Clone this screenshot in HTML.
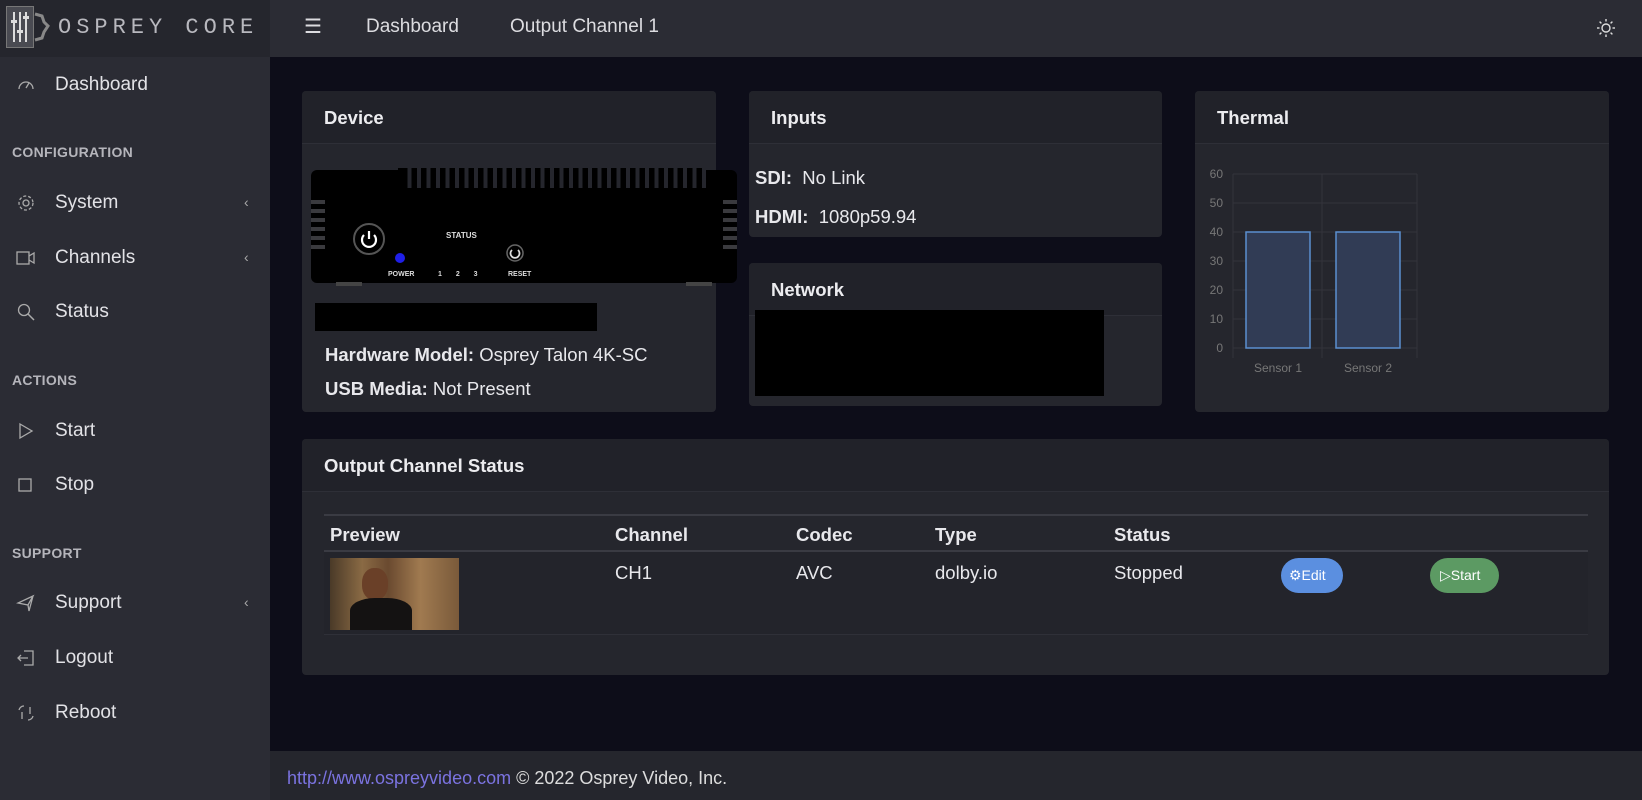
<!DOCTYPE html>
<html><head><meta charset="utf-8"><style>
*{margin:0;padding:0;box-sizing:border-box}
body{width:1642px;height:800px;overflow:hidden;background:#0d0d19;font-family:"Liberation Sans",sans-serif;color:#e4e4e8;position:relative}
.a{position:absolute}
#side{left:0;top:0;width:270px;height:800px;background:#2b2c34}
#logo{left:0;top:0;width:270px;height:57px;background:#25262d}
#top{left:270px;top:0;width:1372px;height:57px;background:#2b2c34}
.nav{font-size:19px;color:#dcdce0;top:16px}
.si{left:55px;font-size:19px;color:#e2e2e6}
.sh{left:12px;font-size:14px;font-weight:bold;color:#b5b5bb;letter-spacing:.3px}
.ic{left:16px;width:20px;height:20px}
.chev{left:244px;color:#aaa;font-size:14px}
.card{background:#25262d;border-radius:4px}
.ch{height:53px;background:#212229;border-bottom:1px solid #2e2f37;border-radius:4px 4px 0 0;font-weight:bold;font-size:18.5px;padding:16px 22px;color:#ececef}
.t{font-size:18.5px;color:#e8e8ec}
#foot{left:270px;top:751px;width:1372px;height:49px;background:#25262d}
.lbl{font-size:12px;fill:#777;font-family:"Liberation Sans",sans-serif}
</style></head><body>
<div id="side" class="a"></div>
<div id="logo" class="a">
 <div class="a" style="left:6px;top:6px;width:28px;height:42px;background:#4a4b52;border:1px solid #777"></div>
 <svg class="a" style="left:6px;top:6px" width="46" height="42" viewBox="0 0 46 42"><g stroke="#ddd" stroke-width="2"><line x1="8" y1="6" x2="8" y2="36"/><line x1="14" y1="6" x2="14" y2="36"/><line x1="20" y1="6" x2="20" y2="36"/></g><g fill="#ddd"><rect x="5" y="14" width="6" height="3"/><rect x="11" y="24" width="6" height="3"/><rect x="17" y="10" width="6" height="3"/></g><path d="M29 8 L36 10 L38 16 L42 20 L38 26 L36 32 L29 34" fill="none" stroke="#888" stroke-width="3"/></svg>
 <div class="a" style="left:58px;top:15px;font-family:'Liberation Mono',monospace;font-size:22px;letter-spacing:5px;color:#b8b8be">OSPREY CORE</div>
</div>
<div id="top" class="a">
 <div class="a nav" style="left:34px;top:14px;font-size:20px">☰</div>
 <div class="a nav" style="left:96px">Dashboard</div>
 <div class="a nav" style="left:240px">Output Channel 1</div>
 <svg class="a" style="left:1326px;top:18px" width="20" height="20" viewBox="0 0 20 20"><circle cx="10" cy="10" r="4" fill="none" stroke="#ddd" stroke-width="1.4"/><g stroke="#ddd" stroke-width="1.4"><line x1="10" y1="1" x2="10" y2="3.5"/><line x1="10" y1="16.5" x2="10" y2="19"/><line x1="1" y1="10" x2="3.5" y2="10"/><line x1="16.5" y1="10" x2="19" y2="10"/><line x1="3.6" y1="3.6" x2="5.4" y2="5.4"/><line x1="14.6" y1="14.6" x2="16.4" y2="16.4"/><line x1="3.6" y1="16.4" x2="5.4" y2="14.6"/><line x1="14.6" y1="5.4" x2="16.4" y2="3.6"/></g></svg>
</div>

<svg class="a ic" style="top:75px" viewBox="0 0 20 20"><path d="M3 14 A7 7 0 1 1 17 14" fill="none" stroke="#aaa" stroke-width="1.3"/><line x1="10" y1="13" x2="13" y2="8" stroke="#aaa" stroke-width="1.3"/></svg>
<div class="a si" style="top:74px">Dashboard</div>
<div class="a sh" style="top:144px">CONFIGURATION</div>
<svg class="a ic" style="top:193px" viewBox="0 0 20 20"><circle cx="10" cy="10" r="3" fill="none" stroke="#aaa" stroke-width="1.3"/><circle cx="10" cy="10" r="7" fill="none" stroke="#aaa" stroke-width="1.3" stroke-dasharray="3 2"/></svg>
<div class="a si" style="top:192px">System</div><div class="a chev" style="top:194px">‹</div>
<svg class="a ic" style="top:248px" viewBox="0 0 20 20"><rect x="1" y="4" width="12" height="12" fill="none" stroke="#aaa" stroke-width="1.3"/><path d="M13 8 L18 5 V15 L13 12" fill="none" stroke="#aaa" stroke-width="1.3"/></svg>
<div class="a si" style="top:247px">Channels</div><div class="a chev" style="top:249px">‹</div>
<svg class="a ic" style="top:302px" viewBox="0 0 20 20"><circle cx="8" cy="8" r="5.5" fill="none" stroke="#aaa" stroke-width="1.3"/><line x1="12" y1="12" x2="18" y2="18" stroke="#aaa" stroke-width="1.5"/></svg>
<div class="a si" style="top:301px">Status</div>
<div class="a sh" style="top:372px">ACTIONS</div>
<svg class="a ic" style="top:421px" viewBox="0 0 20 20"><path d="M4 3 L16 10 L4 17 Z" fill="none" stroke="#aaa" stroke-width="1.3"/></svg>
<div class="a si" style="top:420px">Start</div>
<svg class="a ic" style="top:475px" viewBox="0 0 20 20"><rect x="3" y="4" width="12" height="12" fill="none" stroke="#aaa" stroke-width="1.3"/></svg>
<div class="a si" style="top:474px">Stop</div>
<div class="a sh" style="top:545px">SUPPORT</div>
<svg class="a ic" style="top:593px" viewBox="0 0 20 20"><path d="M17 3 L2 10 L12 12 Z M12 12 L13 18 L17 3" fill="none" stroke="#aaa" stroke-width="1.3"/></svg>
<div class="a si" style="top:592px">Support</div><div class="a chev" style="top:594px">‹</div>
<svg class="a ic" style="top:648px" viewBox="0 0 20 20"><path d="M8 3 H17 V17 H8 M2 10 H12 M5 7 L2 10 L5 13" fill="none" stroke="#aaa" stroke-width="1.3"/></svg>
<div class="a si" style="top:647px">Logout</div>
<svg class="a ic" style="top:703px" viewBox="0 0 20 20"><path d="M3 7 A5 5 0 0 1 8 3 M17 13 A5 5 0 0 1 12 17 M6 16 L6 9 M14 4 L14 11" fill="none" stroke="#aaa" stroke-width="1.3"/></svg>
<div class="a si" style="top:702px">Reboot</div>

<div class="a card" style="left:302px;top:91px;width:414px;height:321px"><div class="ch">Device</div></div>
<div class="a" style="left:311px;top:170px;width:426px;height:113px;background:#000;border-radius:6px"></div>
<svg class="a" style="left:398px;top:168px" width="308" height="20"><defs><pattern id="f" width="9.5" height="20" patternUnits="userSpaceOnUse"><rect x="0" y="0" width="4" height="20" fill="#25262d"/></pattern></defs><rect x="0" y="0" width="308" height="20" fill="#000"/><rect x="4" y="0" width="304" height="20" fill="url(#f)"/></svg>
<svg class="a" style="left:311px;top:200px" width="426" height="55"><g fill="#3a3a3e"><rect x="0" y="0" width="14" height="4"/><rect x="0" y="9" width="14" height="4"/><rect x="0" y="18" width="14" height="4"/><rect x="0" y="27" width="14" height="4"/><rect x="0" y="36" width="14" height="4"/><rect x="0" y="45" width="14" height="4"/><rect x="412" y="0" width="14" height="4"/><rect x="412" y="9" width="14" height="4"/><rect x="412" y="18" width="14" height="4"/><rect x="412" y="27" width="14" height="4"/><rect x="412" y="36" width="14" height="4"/><rect x="412" y="45" width="14" height="4"/></g></svg>
<div class="a" style="left:336px;top:282px;width:26px;height:4px;background:#444"></div>
<div class="a" style="left:686px;top:282px;width:26px;height:4px;background:#444"></div>
<svg class="a" style="left:352px;top:222px" width="34" height="34"><circle cx="17" cy="17" r="15" fill="none" stroke="#555" stroke-width="2"/><path d="M12 13 A7 7 0 1 0 22 13" fill="none" stroke="#fff" stroke-width="2.2"/><line x1="17" y1="9" x2="17" y2="17" stroke="#fff" stroke-width="2.2"/></svg>
<div class="a" style="left:395px;top:253px;width:10px;height:10px;border-radius:50%;background:#1f1fe8"></div>
<div class="a" style="left:388px;top:271px;font-size:7px;font-weight:bold;color:#ddd">POWER</div>
<div class="a" style="left:446px;top:231px;font-size:8px;font-weight:bold;color:#ddd">STATUS</div>
<div class="a" style="left:438px;top:271px;font-size:7px;font-weight:bold;color:#ddd;word-spacing:12px">1 2 3</div>
<svg class="a" style="left:506px;top:244px" width="18" height="18"><circle cx="9" cy="9" r="8" fill="none" stroke="#666" stroke-width="1.5"/><path d="M6 6 A4.5 4.5 0 1 0 12 6" fill="none" stroke="#ddd" stroke-width="1.8"/></svg>
<div class="a" style="left:508px;top:271px;font-size:7px;font-weight:bold;color:#ddd">RESET</div>
<div class="a" style="left:315px;top:303px;width:282px;height:28px;background:#000"></div>
<div class="a t" style="left:325px;top:344px"><b>Hardware Model:</b> Osprey Talon 4K-SC</div>
<div class="a t" style="left:325px;top:378px"><b>USB Media:</b> Not Present</div>

<div class="a card" style="left:749px;top:91px;width:413px;height:146px"><div class="ch">Inputs</div></div>
<div class="a t" style="left:755px;top:167px"><b>SDI:</b>&nbsp; No Link</div>
<div class="a t" style="left:755px;top:206px"><b>HDMI:</b>&nbsp; 1080p59.94</div>
<div class="a card" style="left:749px;top:263px;width:413px;height:143px"><div class="ch">Network</div></div>
<div class="a" style="left:755px;top:310px;width:349px;height:86px;background:#000"></div>

<div class="a card" style="left:1195px;top:91px;width:414px;height:321px"><div class="ch">Thermal</div></div>
<svg class="a" style="left:1195px;top:160px" width="300" height="220">
<g stroke="#33343b" stroke-width="1"><line x1="38" y1="14" x2="222" y2="14"/><line x1="38" y1="43" x2="222" y2="43"/><line x1="38" y1="72" x2="222" y2="72"/><line x1="38" y1="101" x2="222" y2="101"/><line x1="38" y1="130" x2="222" y2="130"/><line x1="38" y1="159" x2="222" y2="159"/><line x1="38" y1="188" x2="222" y2="188"/><line x1="38" y1="14" x2="38" y2="198"/><line x1="127" y1="14" x2="127" y2="198"/><line x1="222" y1="14" x2="222" y2="198"/></g>
<rect x="51" y="72" width="64" height="116" fill="#313c55" stroke="#5b8fd0" stroke-width="1.5"/>
<rect x="141" y="72" width="64" height="116" fill="#313c55" stroke="#5b8fd0" stroke-width="1.5"/>
<g class="lbl" text-anchor="end"><text x="28" y="18">60</text><text x="28" y="47">50</text><text x="28" y="76">40</text><text x="28" y="105">30</text><text x="28" y="134">20</text><text x="28" y="163">10</text><text x="28" y="192">0</text></g>
<g class="lbl" text-anchor="middle"><text x="83" y="212">Sensor 1</text><text x="173" y="212">Sensor 2</text></g>
</svg>

<div class="a card" style="left:302px;top:439px;width:1307px;height:236px"><div class="ch">Output Channel Status</div></div>
<div class="a" style="left:324px;top:514px;width:1264px;height:2px;background:#3a3b43"></div>
<div class="a" style="left:324px;top:550px;width:1264px;height:2px;background:#3a3b43"></div>
<div class="a" style="left:324px;top:552px;width:1264px;height:83px;background:#23242b;border-bottom:1px solid #2f3038"></div>
<div class="a t" style="left:330px;top:524px;font-weight:bold">Preview</div>
<div class="a t" style="left:615px;top:524px;font-weight:bold">Channel</div>
<div class="a t" style="left:796px;top:524px;font-weight:bold">Codec</div>
<div class="a t" style="left:935px;top:524px;font-weight:bold">Type</div>
<div class="a t" style="left:1114px;top:524px;font-weight:bold">Status</div>
<div class="a" style="left:330px;top:558px;width:129px;height:72px;background:linear-gradient(90deg,#4a3a28 0%,#8a6a44 25%,#6a4a30 45%,#a07a50 70%,#7a5a3a 100%)"><div class="a" style="left:32px;top:10px;width:26px;height:32px;border-radius:45%;background:#6a4028"></div><div class="a" style="left:20px;top:40px;width:62px;height:32px;border-radius:40% 40% 0 0;background:#141212"></div></div>
<div class="a t" style="left:615px;top:562px">CH1</div>
<div class="a t" style="left:796px;top:562px">AVC</div>
<div class="a t" style="left:935px;top:562px">dolby.io</div>
<div class="a t" style="left:1114px;top:562px">Stopped</div>
<div class="a" style="left:1281px;top:558px;width:62px;height:35px;border-radius:18px;background:#5b8fe0;color:#fff;font-size:14px;padding:9px 0 0 8px">⚙Edit</div>
<div class="a" style="left:1430px;top:558px;width:69px;height:35px;border-radius:18px;background:#5c9a63;color:#fff;font-size:14px;padding:9px 0 0 10px">▷Start</div>

<div id="foot" class="a"><div class="a" style="left:17px;top:17px;font-size:18px;color:#ddd"><span style="color:#7b73e0">http://www.ospreyvideo.com</span> © 2022 Osprey Video, Inc.</div></div>
</body></html>
